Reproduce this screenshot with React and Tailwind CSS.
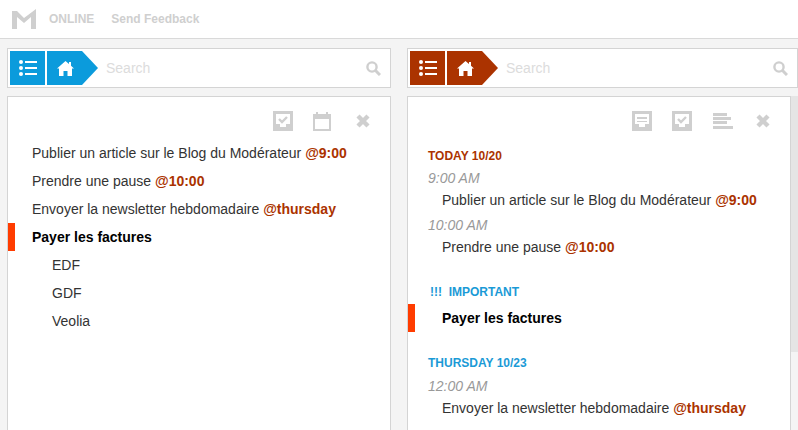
const BLUE = "#0b9bdc";
const RUST = "#ab3300";

function ListIcon() {
  return (
    <svg width="18" height="18" viewBox="0 0 18 18" fill="white">
      <circle cx="2" cy="3" r="2" />
      <circle cx="2" cy="9" r="2" />
      <circle cx="2" cy="15" r="2" />
      <rect x="6" y="2" width="12" height="2" />
      <rect x="6" y="8" width="12" height="2" />
      <rect x="6" y="14" width="12" height="2" />
    </svg>
  );
}

function HomeIcon() {
  return (
    <svg width="17" height="15" viewBox="0 0 17 15" fill="white">
      <path d="M8.5 0 L12 3 L12 1 L14 1 L14 4.7 L17 7.5 L15 7.5 L15 15 L10.5 15 L10.5 10 L6.5 10 L6.5 15 L2 15 L2 7.5 L0 7.5 Z" />
    </svg>
  );
}

function SearchIcon() {
  return (
    <svg width="15" height="15" viewBox="0 0 15 15" fill="none" stroke="#cfcfcf">
      <circle cx="6" cy="6" r="4.6" strokeWidth="2.4" />
      <path d="M9.5 9.5L14 14" strokeWidth="3" />
    </svg>
  );
}

function CheckBoxIcon() {
  return (
    <svg width="20" height="20" viewBox="0 0 20 20">
      <path fillRule="evenodd" fill="#cfcfcf" d="M0 0H20V20H0ZM3 3V13H7V16H13V13H17V3Z" />
      <path d="M6 8L9 11L14 6" stroke="#cfcfcf" strokeWidth="2.4" fill="none" />
    </svg>
  );
}

function NoteIcon() {
  return (
    <svg width="20" height="20" viewBox="0 0 20 20">
      <path fillRule="evenodd" fill="#cfcfcf" d="M0 0H20V20H0ZM3 3V13H7V16H13V13H17V3Z" />
      <rect x="5" y="6" width="10" height="2" fill="#cfcfcf" />
      <rect x="5" y="10" width="10" height="1" fill="#cfcfcf" />
    </svg>
  );
}

function CalendarIcon() {
  return (
    <svg width="18" height="19" viewBox="0 0 18 19">
      <path fillRule="evenodd" fill="#cfcfcf" d="M0 2H3V0H5V2H13V0H15V2H18V19H0ZM2 7V17H16V7Z" />
    </svg>
  );
}

function AlignIcon() {
  return (
    <svg width="20" height="16" viewBox="0 0 20 16" fill="#cfcfcf">
      <rect width="14" height="3" />
      <rect y="4" width="18" height="3" />
      <rect y="8" width="14" height="3" />
      <rect y="13" width="20" height="3" />
    </svg>
  );
}

function CloseIcon() {
  return (
    <svg width="14" height="14" viewBox="0 0 14 14" stroke="#cfcfcf" strokeWidth="4.4" fill="none">
      <path d="M2 2L12 12M12 2L2 12" />
    </svg>
  );
}

function SearchBar({ color }) {
  return (
    <div className="h-[40px] bg-white border border-[#d4d4d4] flex items-center pl-[2px] pr-[9px] py-[2px]">
      <div className="w-[35px] h-[34px] flex items-center justify-center" style={{ background: color }}>
        <ListIcon />
      </div>
      <div
        className="ml-[2px] w-[51px] h-[34px] flex items-center pl-[10px] [clip-path:polygon(0_0,35px_0,100%_50%,35px_100%,0_100%)]"
        style={{ background: color }}
      >
        <HomeIcon />
      </div>
      <span className="ml-[8px] flex-1 text-[14px] text-[#dcdcdc]">Search</span>
      <SearchIcon />
    </div>
  );
}

function At({ children }) {
  return <span className="font-bold text-[#ab3300]">{children}</span>;
}

function Flag() {
  return <div className="absolute left-0 top-0 h-[28px] w-[7px] bg-[#ff3c00]" />;
}

function Heading({ color, children }) {
  return <div className={`text-[12px] font-bold uppercase pl-[20px] ${color}`}>{children}</div>;
}

function Time({ children }) {
  return <div className="italic text-[14px] leading-[20px] text-[#999999] pl-[20px]">{children}</div>;
}

function Entry({ children }) {
  return <div className="text-[14px] leading-[20px] text-[#333333] pl-[34px]">{children}</div>;
}

export default function App() {
  return (
    <div className="h-[430px] overflow-hidden bg-[#f4f4f4] font-['Liberation_Sans',Arial,sans-serif]">
      <header className="h-[39px] bg-white border-b border-[#d9d9d9] flex items-center pl-[12px]">
        <svg width="24" height="20" viewBox="0 0 24 20">
          <path d="M0 2 L5 2 L12 9 L24 0 L24 20 L19 20 L19 8 L12 14 L5 8 L5 20 L0 20 Z" fill="#cfcfcf" />
        </svg>
        <span className="ml-[13px] text-[12px] font-bold text-[#cfcfcf]">ONLINE</span>
        <span className="ml-[17px] text-[12px] font-bold text-[#cfcfcf]">Send Feedback</span>
      </header>

      <main className="grid grid-cols-[407px_391px] pt-[9px]">
        <section className="pl-[7px] pr-[16px]">
          <SearchBar color={BLUE} />
          <div className="mt-[8px] flex">
            <div className="w-[384px] shrink-0 h-[340px] bg-white border border-[#d4d4d4]">
              <div className="h-[42px] flex items-center justify-end pr-[20px] pt-[6px]">
                <CheckBoxIcon />
                <div className="ml-[20px]"><CalendarIcon /></div>
                <div className="ml-[25px]"><CloseIcon /></div>
              </div>
              <ul className="text-[14px] text-[#333333] pl-[24px]">
                <li className="h-[28px] leading-[28px]">Publier un article sur le Blog du Modérateur <At>@9:00</At></li>
                <li className="h-[28px] leading-[28px]">Prendre une pause <At>@10:00</At></li>
                <li className="h-[28px] leading-[28px]">Envoyer la newsletter hebdomadaire <At>@thursday</At></li>
                <li className="relative h-[28px] leading-[28px] font-bold text-black -ml-[24px] pl-[24px]">
                  <Flag />
                  Payer les factures
                </li>
                <li className="h-[28px] leading-[28px] pl-[20px]">EDF</li>
                <li className="h-[28px] leading-[28px] pl-[20px]">GDF</li>
                <li className="h-[28px] leading-[28px] pl-[20px]">Veolia</li>
              </ul>
            </div>
            <div className="w-[8px] h-[277px] bg-[#e5e5e5]" />
          </div>
        </section>

        <section>
          <SearchBar color={RUST} />
          <div className="mt-[8px] flex">
            <div className="w-[384px] shrink-0 h-[340px] bg-white border border-[#d4d4d4]">
              <div className="h-[42px] flex items-center justify-end pr-[20px] pt-[6px]">
                <NoteIcon />
                <div className="ml-[20px]"><CheckBoxIcon /></div>
                <div className="ml-[21px]"><AlignIcon /></div>
                <div className="ml-[23px]"><CloseIcon /></div>
              </div>
              <div className="mt-[8px]">
                <Heading color="text-[#ab3300]">Today 10/20</Heading>
                <div className="mt-[3px]"><Time>9:00 AM</Time></div>
                <div className="mt-[2px]"><Entry>Publier un article sur le Blog du Modérateur <At>@9:00</At></Entry></div>
                <div className="mt-[5px]"><Time>10:00 AM</Time></div>
                <div className="mt-[2px]"><Entry>Prendre une pause <At>@10:00</At></Entry></div>
                <div className="mt-[26px] text-[12px] font-bold text-[#1b9ad6] pl-[22px]">!!!&nbsp; IMPORTANT</div>
                <div className="relative mt-[3px] h-[28px] leading-[28px] pl-[34px] text-[14px] font-bold text-black">
                  <Flag />
                  Payer les factures
                </div>
                <div className="mt-[22px]"><Heading color="text-[#1b9ad6]">Thursday 10/23</Heading></div>
                <div className="mt-[4px]"><Time>12:00 AM</Time></div>
                <div className="mt-[2px]"><Entry>Envoyer la newsletter hebdomadaire <At>@thursday</At></Entry></div>
              </div>
            </div>
            <div className="w-[7px] h-[256px] bg-[#e5e5e5]" />
          </div>
        </section>
      </main>
    </div>
  );
}
